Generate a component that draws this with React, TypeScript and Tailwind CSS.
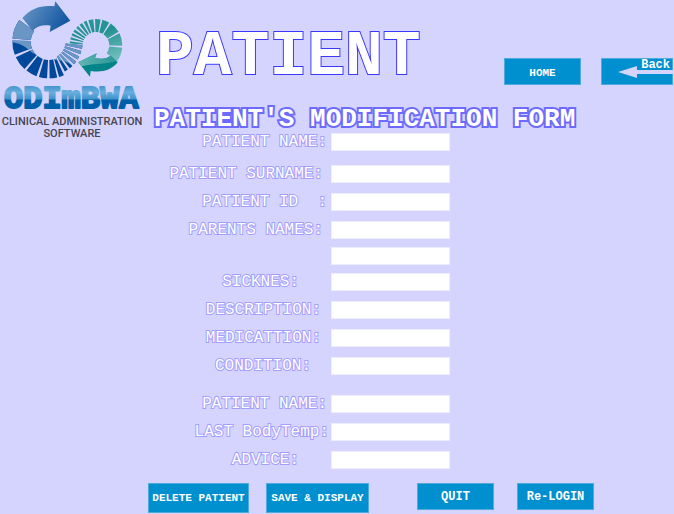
import React from 'react';

type Field = { id: string; label?: string; name?: string; gap: string; pad: string };

const fields: Field[] = [
  { id: 'name', label: 'PATIENT NAME:', gap: 'mt-0', pad: 'pr-1' },
  { id: 'surname', label: 'PATIENT SURNAME:', gap: 'mt-3.5', pad: 'pr-2' },
  { id: 'pid', label: 'PATIENT ID  :', gap: 'mt-2.5', pad: 'pr-1' },
  { id: 'parent1', label: 'PARENTS NAMES:', gap: 'mt-2.5', pad: 'pr-2' },
  { id: 'parent2', name: 'Second parent name', gap: 'mt-2', pad: 'pr-1' },
  { id: 'sickness', label: 'SICKNES:', gap: 'mt-2', pad: 'pr-8' },
  { id: 'description', label: 'DESCRIPTION:', gap: 'mt-2.5', pad: 'pr-2.5' },
  { id: 'medication', label: 'MEDICATTION:', gap: 'mt-2.5', pad: 'pr-2.5' },
  { id: 'condition', label: 'CONDITION:', gap: 'mt-2.5', pad: 'pr-5' },
  { id: 'name2', label: 'PATIENT NAME:', gap: 'mt-5', pad: 'pr-1' },
  { id: 'temp', label: 'LAST BodyTemp:', gap: 'mt-2.5', pad: 'pr-0.5' },
  { id: 'advice', label: 'ADVICE:', gap: 'mt-2.5', pad: 'pr-8' },
];

function wedge(cx: number, cy: number, r: number, R: number, a: number, b: number) {
  const p = (rad: number, deg: number) => {
    const t = (deg * Math.PI) / 180;
    return `${(cx + rad * Math.cos(t)).toFixed(1)} ${(cy + rad * Math.sin(t)).toFixed(1)}`;
  };
  return `M${p(r, a)}L${p(R, a)}A${R} ${R} 0 0 1 ${p(R, b)}L${p(r, b)}A${r} ${r} 0 0 0 ${p(r, a)}Z`;
}

const blue: [number, number][] = [
  [185, 216], [159, 182], [132, 155], [110, 128], [93, 106], [77, 89], [66, 74],
  [56, 62], [46, 52], [36, 42], [26, 32], [16, 22], [6, 12],
];
const teal: [number, number][] = [
  [184, 189], [193, 198], [202, 207], [211, 217], [221, 227], [231, 238], [242, 249],
  [253, 264], [268, 280], [284, 300], [304, 329], [333, 361], [365, 397],
];

function Swirl() {
  const bluePath = blue
    .map(([a, b]) => wedge(147, 125, a < 60 ? 50 : 55, a < 60 ? 101 : 110, a, b))
    .join('');
  const tealPath = teal.map(([a, b]) => wedge(288, 136, 40, 79, a, b)).join('');
  return (
    <svg viewBox="0 0 432 240" className="block h-20 w-36" aria-hidden="true">
      <defs>
        <linearGradient id="arrow" x1="0" y1="0" x2="1" y2="0.4">
          <stop offset="0" stopColor="#6f9ac8" />
          <stop offset="1" stopColor="#1558a2" />
        </linearGradient>
        <linearGradient id="ring" x1="0.2" y1="0" x2="0.6" y2="1">
          <stop offset="0" stopColor="#2d9a9a" />
          <stop offset="0.4" stopColor="#239191" />
          <stop offset="1" stopColor="#6cbcb8" />
        </linearGradient>
        <linearGradient id="tail" x1="0" y1="0" x2="1" y2="0">
          <stop offset="0" stopColor="#62b6b2" />
          <stop offset="1" stopColor="#289696" />
        </linearGradient>
        <clipPath id="gloss">
          <path d="M0 0H300V205L222 203C205 180 175 182 155 178C130 172 105 165 90 153C75 138 60 126 0 123Z" />
        </clipPath>
      </defs>
      <path d={bluePath} fill="#00499a" />
      <path d={bluePath} fill="#6a96c6" clipPath="url(#gloss)" />
      <path
        d="M67 54C92 24 127 14 163 19L166 4L211 62L149 96L152 77C130 73 112 78 98 92Z"
        fill="url(#arrow)"
      />
      <path d={tealPath} fill="url(#ring)" />
      <path
        d="M235 187L290 160L285 174C307 178 320 176 332 167L353 187C335 210 306 219 272 213L270 230Z"
        fill="#008487"
      />
      <path d="M235 187L290 160L285 174C307 178 320 176 332 167L350 184C322 192 290 190 244 199Z" fill="url(#tail)" />
    </svg>
  );
}

function NavButton({ className, children }: { className: string; children: React.ReactNode }) {
  return (
    <button
      type="button"
      className={`shrink-0 whitespace-nowrap border border-[#4fabdf] bg-[#008fcf] font-bold text-white ${className}`}
    >
      {children}
    </button>
  );
}

export default function App() {
  return (
    <div className="flex min-h-screen items-start bg-[#d5d4ff] font-['Liberation_Mono',monospace]">
      <aside className="flex w-36 shrink-0 flex-col">
        <Swirl />
        <svg viewBox="0 0 144 36" className="block h-9 w-36" role="img" aria-label="ODIMBWA">
          <defs>
            <linearGradient id="word" gradientUnits="userSpaceOnUse" x1="0" y1="5" x2="0" y2="30">
              <stop offset="0" stopColor="#3f92cc" />
              <stop offset="0.3" stopColor="#68aedd" />
              <stop offset="0.56" stopColor="#3f92cc" />
              <stop offset="0.6" stopColor="#005fa9" />
              <stop offset="1" stopColor="#005fa9" />
            </linearGradient>
          </defs>
          <text
            x="4"
            y="28"
            fill="url(#word)"
            stroke="url(#word)"
            strokeWidth="2"
            strokeLinejoin="round"
            className="text-[32px] font-bold"
          >
            ODImBWA
          </text>
        </svg>
        <p className="text-center font-['Roboto',sans-serif] text-[11px] leading-3 font-medium whitespace-nowrap text-[#45454f]">
          CLINICAL ADMINISTRATION
          <br />
          SOFTWARE
        </p>
      </aside>

      <main className="min-w-0 flex-1">
        <header className="flex h-[101px] items-start justify-between">
          <h1 className="pt-[22px] pl-3 text-[63px] leading-[72px] font-bold text-white [-webkit-text-stroke:2px_#3a38ff] [paint-order:stroke_fill]">
            PATIENT
          </h1>
          <nav className="flex gap-5 pt-[58px] pr-px">
            <NavButton className="h-[27px] w-[77px] pt-1 text-[11px]">HOME</NavButton>
            <NavButton className="relative h-[27px] w-[72px] text-[12px]">
              <svg viewBox="0 0 72 27" className="absolute -top-px -left-px h-[27px] w-[72px]" aria-hidden="true">
                <path d="M17 14L36 8V12H72V16H36V20Z" fill="#d5d4ff" />
              </svg>
              <span className="absolute -top-0.5 right-0.5 leading-4">Back</span>
            </NavButton>
          </nav>
        </header>

        <h2 className="h-8 pl-2.5 text-[26px] leading-9 font-bold whitespace-nowrap text-white [-webkit-text-stroke:4px_#6d6aff] [paint-order:stroke_fill]">
          PATIENT'S MODIFICATION FORM
        </h2>

        <form>
          {fields.map((f) => (
            <div key={f.id} className={`flex h-[18px] items-center ${f.gap}`}>
              <div className={`flex w-[187px] shrink-0 justify-end ${f.pad}`}>
                {f.label && (
                  <label
                    htmlFor={f.id}
                    className="text-[16px] leading-[18px] whitespace-pre text-white [-webkit-text-stroke:2px_#a19eff] [paint-order:stroke_fill]"
                  >
                    {f.label}
                  </label>
                )}
              </div>
              <input
                id={f.id}
                type="text"
                aria-label={f.name}
                className="h-[18px] w-[119px] border border-[#eeedff] bg-white px-1 text-xs text-black outline-none"
              />
            </div>
          ))}

          <div className="flex items-start pt-3.5 pl-1">
            <NavButton className="h-[30px] w-[101px] text-[11px]">DELETE PATIENT</NavButton>
            <NavButton className="ml-[17px] h-[30px] w-[103px] text-[11px]">SAVE &amp; DISPLAY</NavButton>
            <NavButton className="ml-12 h-[27px] w-[77px] text-[12px]">QUIT</NavButton>
            <NavButton className="ml-[23px] h-[27px] w-[77px] text-[12px]">Re-LOGIN</NavButton>
          </div>
        </form>
      </main>
    </div>
  );
}
